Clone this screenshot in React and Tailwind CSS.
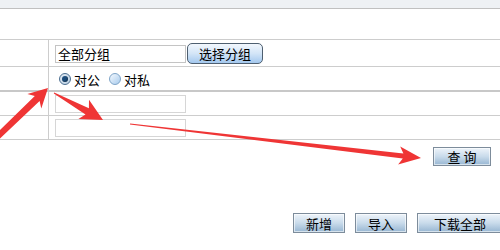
import React from "react";

function arrowPoints(tail, tip, tw, sw, hw, hl) {
  const dx = tip[0] - tail[0];
  const dy = tip[1] - tail[1];
  const len = Math.hypot(dx, dy);
  const d = [dx / len, dy / len];
  const n = [-d[1], d[0]];
  const base = [tip[0] - d[0] * hl, tip[1] - d[1] * hl];
  const junc = [base[0] + d[0] * 4, base[1] + d[1] * 4];
  const p = (pt, k, v) => [pt[0] + v[0] * k, pt[1] + v[1] * k];
  const pts = [
    p(tail, tw / 2, n),
    p(junc, sw / 2, n),
    p(base, hw / 2, n),
    tip,
    p(base, -hw / 2, n),
    p(junc, -sw / 2, n),
    p(tail, -tw / 2, n),
  ];
  return pts.map((q) => q[0].toFixed(1) + "," + q[1].toFixed(1)).join(" ");
}

function Btn({ children, className }) {
  return (
    <div
      className={
        "flex items-center justify-center border border-[#7d8c9b] bg-gradient-to-b from-[#eef4fa] via-[#c9dbeb] to-[#97b6d2] shadow-[inset_0_0_0_1px_rgba(255,255,255,0.6)] text-[13px] text-black leading-none " +
        className
      }
    >
      {children}
    </div>
  );
}

export default function App() {
  return (
    <div
      className="relative w-[500px] h-[250px] overflow-hidden bg-white text-black"
      style={{ fontFamily: '"Noto Sans CJK SC", "Noto Sans", sans-serif' }}
    >
      <div className="h-[9px] bg-[#eef1f4] border-b border-[#c0c0c0]" />
      <div className="h-[30px]" />

      <div className="border-b border-[#cdcdcd]">
        {/* row 1 */}
        <div className="flex h-[27px] border-t border-[#cdcdcd]">
          <div className="w-[49px] border-r border-[#cdcdcd]" />
          <div className="flex items-center pl-[6px] pt-[1px]">
            <div className="flex items-center w-[131px] h-[18px] border border-[#c4c4c4] pl-[2px] text-[13px] leading-none">
              全部分组
            </div>
            <div className="ml-[1px] mb-[1px] flex items-center justify-center w-[76px] h-[21px] rounded-[5px] border border-[#4e5f70] bg-gradient-to-b from-[#f2f7fd] via-[#d3e5f7] to-[#a4c8ee] text-[13px] leading-none">
              选择分组
            </div>
          </div>
        </div>
        {/* row 2 */}
        <div className="flex h-[24px] border-t border-[#cdcdcd]">
          <div className="w-[49px] border-r border-[#cdcdcd]" />
          <div className="flex items-center pl-[10px] pt-[1px] text-[13px] leading-none">
            <span className="relative flex items-center justify-center w-[12px] h-[12px] rounded-full border border-[#4c6f91] bg-gradient-to-br from-[#e6eef6] to-[#b9cde0]">
              <span className="w-[6px] h-[6px] rounded-full bg-[#1d4d7c] shadow-[inset_-1px_-1px_1px_rgba(0,0,0,0.3)]" />
            </span>
            <span className="ml-[3px]">对公</span>
            <span className="ml-[9px] w-[12px] h-[12px] rounded-full border border-[#7ea4c8] bg-gradient-to-br from-[#f4f9fe] to-[#a9cbec]" />
            <span className="ml-[3px]">对私</span>
          </div>
        </div>
        {/* row 3 */}
        <div className="flex h-[25px] border-t-2 border-[#c8c8c8]">
          <div className="w-[49px] border-r border-[#cdcdcd]" />
          <div className="flex items-center pl-[6px]">
            <div className="w-[131px] h-[18px] border border-[#d6d6d6]" />
          </div>
        </div>
        {/* row 4 */}
        <div className="flex h-[24px] border-t border-[#cdcdcd]">
          <div className="w-[49px] border-r border-[#cdcdcd]" />
          <div className="flex items-center pl-[6px]">
            <div className="w-[131px] h-[18px] border border-[#d6d6d6]" />
          </div>
        </div>
      </div>

      <div className="flex justify-end pr-[9px] pt-[7px]">
        <Btn className="w-[58px] h-[19px]">查 询</Btn>
      </div>

      <div className="flex gap-[10px] pl-[293px] pt-[47px]">
        <Btn className="w-[52px] h-[20px] shrink-0">新增</Btn>
        <Btn className="w-[52px] h-[20px] shrink-0">导入</Btn>
        <Btn className="w-[86px] h-[20px] shrink-0">下载全部</Btn>
      </div>

      <svg
        className="absolute left-0 top-0 pointer-events-none"
        width="500"
        height="250"
        viewBox="0 0 500 250"
      >
        <polygon fill="#ef3535" points={arrowPoints([-6, 140], [48, 88], 6, 7, 20, 19)} />
        <polygon fill="#ef3535" points={arrowPoints([54, 93], [103, 120], 1, 7, 22, 22)} />
        <polygon fill="#ef3535" points={arrowPoints([130, 124], [421, 158], 1, 5, 18, 22)} />
      </svg>
    </div>
  );
}
